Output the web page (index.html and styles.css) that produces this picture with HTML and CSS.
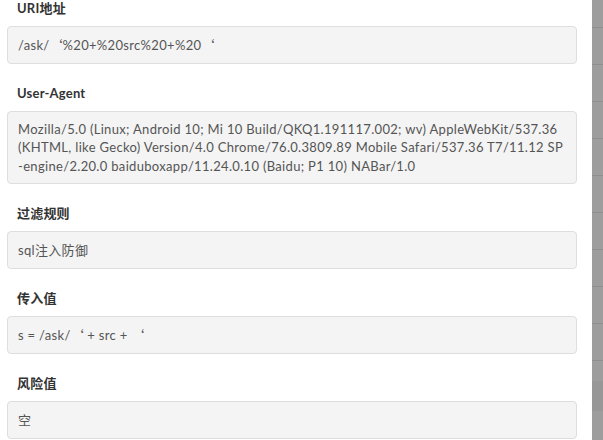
FILE: index.html
```html
<!DOCTYPE html>
<html lang="zh">
<head>
<meta charset="utf-8">
<link rel="stylesheet" href="styles.css">
</head>
<body>
<div class="screen">
  <div class="drawer">
    <div class="content">
      <div class="item">
        <div class="label">URI地址</div>
        <div class="value">/ask/<span class="fw">‘</span>%20+%20src%20+%20<span class="fw">‘</span></div>
      </div>
      <div class="item">
        <div class="label">User-Agent</div>
        <div class="value multi">Mozilla/5.0 (Linux; Android 10; Mi 10 Build/QKQ1.191117.002; wv) AppleWebKit/537.36<br>(KHTML, like Gecko) Version/4.0 Chrome/76.0.3809.89 Mobile Safari/537.36 T7/11.12 SP<br>-engine/2.20.0 baiduboxapp/11.24.0.10 (Baidu; P1 10) NABar/1.0</div>
      </div>
      <div class="item">
        <div class="label">过滤规则</div>
        <div class="value">sql注入防御</div>
      </div>
      <div class="item">
        <div class="label">传入值</div>
        <div class="value">s = /ask/<span class="fw">‘</span> + src + <span class="fw">‘</span></div>
      </div>
      <div class="item">
        <div class="label">风险值</div>
        <div class="value">空</div>
      </div>
    </div>
  </div>
  <div class="mask">
    <div class="row first"></div>
    <div class="row"></div>
    <div class="row"></div>
    <div class="row"></div>
    <div class="row"></div>
    <div class="row"></div>
    <div class="row"></div>
    <div class="row"></div>
    <div class="row"></div>
    <div class="row"></div>
    <div class="gap"></div>
    <div class="band"></div>
  </div>
</div>
</body>
</html>
```
FILE: styles.css
```css
html, body {
  margin: 0;
  padding: 0;
  background: #ffffff;
}
.screen {
  display: flex;
  width: 603px;
  height: 440px;
  overflow: hidden;
}
.drawer {
  width: 592px;
  flex: none;
  background: #ffffff;
  overflow: hidden;
}
.content {
  padding: 0 15px 0 7px;
  margin-top: -2px;
  font-family: "Lato", "Noto Sans CJK SC", sans-serif;
  font-size: 13px;
}
.item {
  margin-bottom: 19px;
}
.label {
  line-height: 20px;
  font-weight: 700;
  color: #333333;
  padding-left: 10px;
  margin-bottom: 8px;
  letter-spacing: 0.2px;
}
.value {
  background: #f4f4f4;
  border: 1px solid #dedede;
  border-radius: 4px;
  padding: 9px 10px;
  line-height: 18px;
  color: #555555;
  white-space: nowrap;
  letter-spacing: 0.32px;
}
.value.multi {
  padding-top: 8px;
  padding-bottom: 8px;
  line-height: 18.3px;
}
.fw {
  font-family: "Noto Sans CJK SC", sans-serif;
  letter-spacing: 0;
}
.mask {
  flex: 1;
  background: #9d9d9d;
}
.row {
  height: 36px;
  border-bottom: 1px solid #8f8f8f;
}
.row.first {
  height: 27px;
}
.gap {
  height: 20px;
}
.band {
  height: 30px;
  background: #979797;
}
```
